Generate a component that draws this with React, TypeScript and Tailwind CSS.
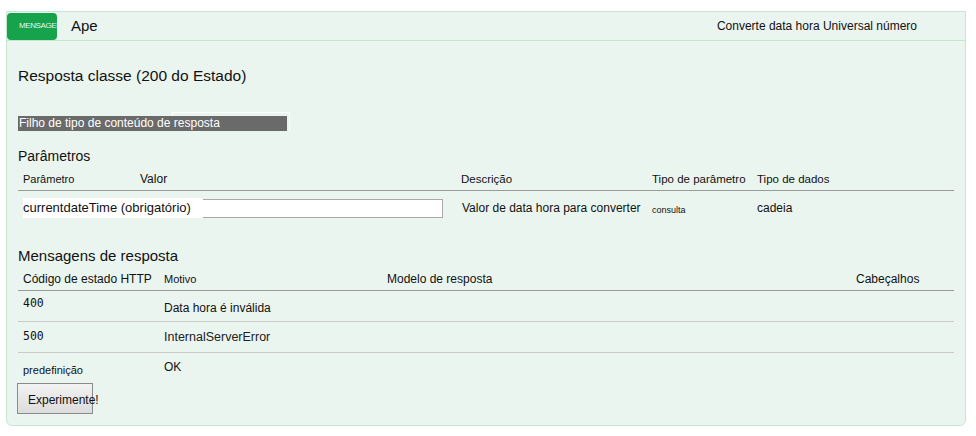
export default function App() {
  const font = { fontFamily: '"Liberation Sans", Arial, sans-serif' };
  const mono = { fontFamily: '"DejaVu Sans Mono", monospace' };
  return (
    <div className="min-h-[436px] bg-white pl-[6px] pt-[11px] text-[#111]" style={font}>
      <div className="w-[960px] rounded-b-md border border-[#c5e6d2] bg-[#ebf5f0]">
        {/* header */}
        <div className="flex h-[29px] items-center border-b border-[#c5e6d2]">
          <div className="flex h-[27px] w-[50px] shrink-0 items-center rounded-[4px] bg-[#17a34c] pl-[12px]">
            <span className="whitespace-nowrap text-[8px] tracking-[-0.4px] text-[#e4f6ea]">MENSAGEM</span>
          </div>
          <span className="ml-[14px] text-[15px]">Ape</span>
          <span className="ml-auto mr-[48px] text-[12px]">Converte data hora Universal número</span>
        </div>

        <div className="px-[11px] pb-[11px]">
          <h2 className="mt-[24px] text-[15.5px] leading-[22px]">Resposta classe (200 do Estado)</h2>

          {/* content type */}
          <div className="relative mt-[25px] h-[19px] w-[272px]">
            <div className="absolute left-[154px] top-0 h-[19px] w-[118px] border border-b-0 border-white" />
            <div className="absolute left-0 top-[4px] h-[15px] w-[269px] bg-[#6a6a6a] pl-[1px] text-[12px] leading-[15px] text-white">
              Filho de tipo de conteúdo de resposta
            </div>
          </div>

          <h3 className="mt-[16px] text-[14px] leading-[18px]">Parâmetros</h3>
          <div className="grid h-[26px] grid-cols-[122px_321px_191px_105px_1fr] items-end border-b border-[#9a9a9a] pb-[4px] text-[11px] leading-[14px]">
            <span className="pl-[5px]">Parâmetro</span>
            <span className="text-[12px]">Valor</span>
            <span className="text-[11.5px]">Descrição</span>
            <span className="text-[11.5px]">Tipo de parâmetro</span>
            <span className="text-[11.5px]">Tipo de dados</span>
          </div>
          <div className="grid h-[34px] grid-cols-[122px_321px_191px_105px_1fr] items-center">
            <div className="relative col-span-2 h-[20px]">
              <div className="absolute left-[154px] right-[18px] top-[1px] h-[19px] border border-[#a8a8a8] bg-white" />
              <span className="absolute left-[5px] top-0 bg-white pr-[12px] text-[13px] leading-[20px]">
                currentdateTime (obrigatório)
              </span>
            </div>
            <span className="pl-[1px] text-[12px]">Valor de data hora para converter</span>
            <span className="mt-[5px] text-[9px]">consulta</span>
            <span className="text-[12px]">cadeia</span>
          </div>

          <h3 className="mt-[21px] text-[15px] leading-[20px]">Mensagens de resposta</h3>
          <div className="grid h-[25px] grid-cols-[146px_223px_469px_1fr] items-end border-b border-[#9a9a9a] pb-[3px] text-[12px] leading-[15px]">
            <span className="pl-[5px]">Código de estado HTTP</span>
            <span className="text-[11px]">Motivo</span>
            <span>Modelo de resposta</span>
            <span>Cabeçalhos</span>
          </div>
          <div className="grid h-[31px] grid-cols-[146px_223px_469px_1fr] items-center border-b border-[#cacaca] text-[12px]">
            <span className="-mt-[5px] pl-[5px] text-[11.5px]" style={mono}>400</span>
            <span className="mt-[4px]">Data hora é inválida</span>
            <span />
            <span />
          </div>
          <div className="grid h-[31px] grid-cols-[146px_223px_469px_1fr] items-center border-b border-[#cacaca] text-[12px]">
            <span className="pl-[5px] text-[11.5px]" style={mono}>500</span>
            <span className="text-[12.5px] text-[#222]">InternalServerError</span>
            <span />
            <span />
          </div>
          <div className="grid h-[30px] grid-cols-[146px_223px_469px_1fr] items-center">
            <span className="mt-[4px] pl-[5px] text-[11px]">predefinição</span>
            <span className="-mt-[2px] text-[12px]">OK</span>
            <span />
            <span />
          </div>
          <button
            type="button"
            className="-ml-[1px] h-[31px] w-[76px] border border-[#8a8a8a] bg-gradient-to-b from-[#f2f2f2] to-[#dcdcdc] pl-[10px] pt-[3px] text-left text-[12px]"
          >
            Experimente!
          </button>
        </div>
      </div>
    </div>
  );
}
